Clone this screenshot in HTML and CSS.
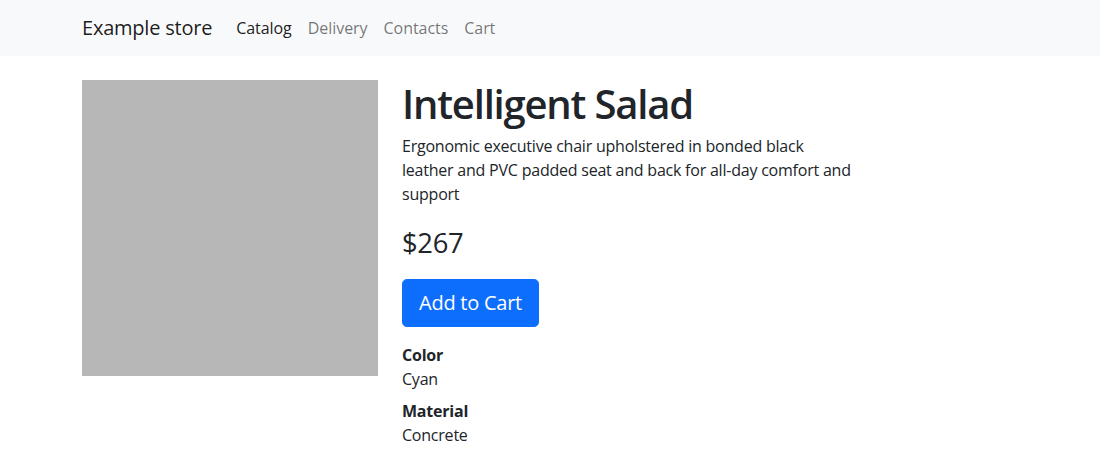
FILE: index.html
```html
<!DOCTYPE html>
<html lang="en">
<head>
<meta charset="utf-8">
<title>Intelligent Salad - Example store</title>
<link rel="stylesheet" href="styles.css">
</head>
<body>
<nav class="navbar">
  <div class="container nav-inner">
    <a class="brand" href="#">Example store</a>
    <ul class="nav-links">
      <li><a class="nav-link active" href="#">Catalog</a></li>
      <li><a class="nav-link" href="#">Delivery</a></li>
      <li><a class="nav-link" href="#">Contacts</a></li>
      <li><a class="nav-link" href="#">Cart</a></li>
    </ul>
  </div>
</nav>
<main class="container product">
  <div class="product-image"></div>
  <div class="product-info">
    <h1 class="title">Intelligent Salad</h1>
    <p class="description">Ergonomic executive chair upholstered in bonded black leather and PVC padded seat and back for all-day comfort and support</p>
    <h3 class="price">$267</h3>
    <button class="btn-cart" type="button">Add to Cart</button>
    <dl class="props">
      <dt>Color</dt>
      <dd>Cyan</dd>
      <dt>Material</dt>
      <dd>Concrete</dd>
    </dl>
  </div>
</main>
</body>
</html>
```
FILE: styles.css
```css
* { box-sizing: border-box; }
html, body { margin: 0; padding: 0; }
body {
  font-family: "Open Sans", "Noto Sans", sans-serif;
  font-size: 16px;
  line-height: 1.5;
  letter-spacing: -0.22px;
  color: #212529;
  background: #fff;
}
.container {
  width: 960px;
  margin: 0 auto;
  padding: 0 12px;
}
.navbar {
  background: #f8f9fa;
  height: 56px;
}
.nav-inner {
  display: flex;
  align-items: center;
  height: 56px;
}
.brand {
  font-size: 20px;
  line-height: 30px;
  color: rgba(0,0,0,.9);
  text-decoration: none;
  margin-right: 16px;
}
.nav-links {
  display: flex;
  list-style: none;
  margin: 0;
  padding: 0;
}
.nav-link {
  display: block;
  padding: 8px;
  letter-spacing: -0.05px;
  color: rgba(0,0,0,.55);
  text-decoration: none;
}
.nav-link.active { color: rgba(0,0,0,.9); }
.product {
  display: flex;
  gap: 24px;
  margin-top: 24px;
}
.product-image {
  width: 296px;
  height: 296px;
  background: #b7b7b7;
  flex: none;
}
.product-info {
  width: 456px;
}
.title {
  font-size: 40px;
  font-weight: 600;
  line-height: 48px;
  letter-spacing: -1.2px;
  margin: 0 0 6px;
}
.description {
  margin: 0 0 19px;
}
.price {
  font-size: 27.4px;
  font-weight: 400;
  line-height: 36px;
  letter-spacing: -0.3px;
  margin: 0 0 18px;
}
.btn-cart {
  font-family: inherit;
  font-size: 20px;
  line-height: 30px;
  letter-spacing: -0.25px;
  padding: 8px 16px;
  color: #fff;
  background: #0d6efd;
  border: 1px solid #0d6efd;
  border-radius: 4.8px;
  margin: 0 0 16px;
  display: block;
}
.props { margin: 0; }
.props dt { font-weight: 700; }
.props dd { margin: 0 0 8px; }
```
